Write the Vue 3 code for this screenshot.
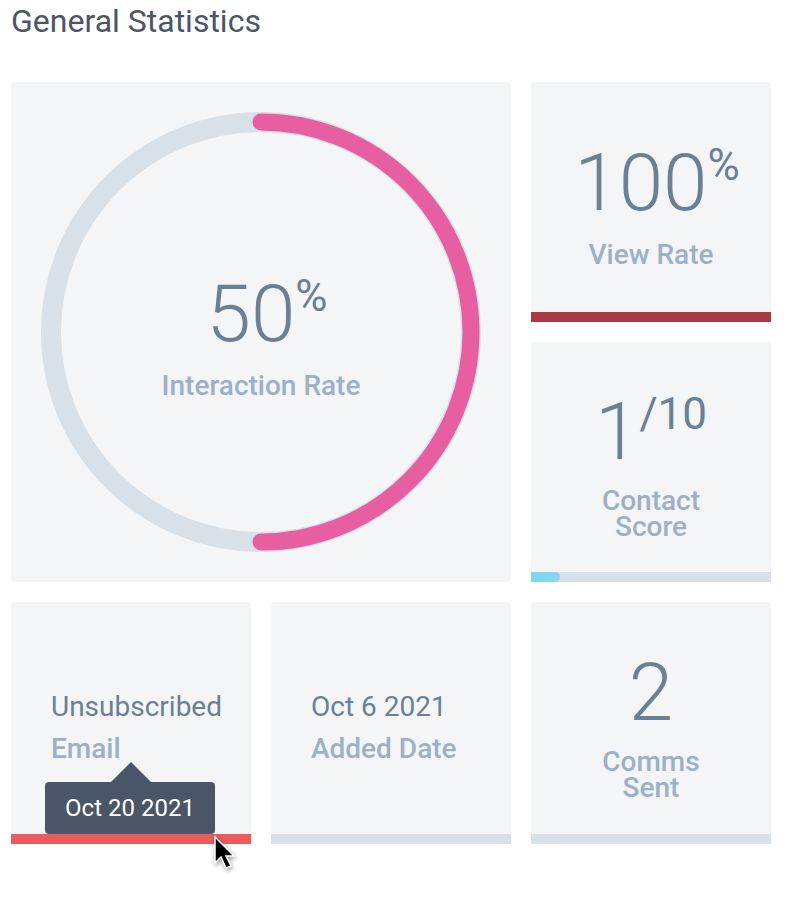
<template>
  <div class="stats">
    <h2 class="title">General Statistics</h2>

    <div class="grid">
      <div class="card gauge-card">
        <svg class="gauge" viewBox="0 0 440 440" width="440" height="440">
          <circle cx="220" cy="220" r="210" fill="none" stroke="#d8e0e8" stroke-width="20" />
          <path d="M220 10 A210 210 0 0 1 220 430" fill="none" stroke="#e85fa1" stroke-width="17" stroke-linecap="round" />
        </svg>
        <div class="gauge-text">
          <div class="value percent">50<sup class="unit">%</sup></div>
          <div class="label">Interaction Rate</div>
        </div>
      </div>

      <div class="card">
        <div class="body rate">
          <div class="value percent">100<sup class="unit">%</sup></div>
          <div class="label">View Rate</div>
        </div>
        <div class="bar bar-red"></div>
      </div>

      <div class="card">
        <div class="body">
          <div class="value">1<sup class="unit">/10</sup></div>
          <div class="label tight">Contact<br />Score</div>
        </div>
        <div class="bar"><div class="fill" :style="{ width: score * 10 + '%' }"></div></div>
      </div>

      <div class="card">
        <div class="body left">
          <div class="info">Unsubscribed</div>
          <div class="label">Email</div>
        </div>
        <div class="bar bar-coral"></div>
        <div class="tooltip">Oct 20 2021</div>
        <svg class="cursor" viewBox="0 0 24 36" width="24" height="36">
          <path d="M2 1 V27 L8 21 L13 32 L18 30 L13 20 H21 Z" fill="#000" stroke="#fff" stroke-width="1.5" />
        </svg>
      </div>

      <div class="card">
        <div class="body left">
          <div class="info">Oct 6 2021</div>
          <div class="label">Added Date</div>
        </div>
        <div class="bar"></div>
      </div>

      <div class="card">
        <div class="body">
          <div class="value">2</div>
          <div class="label tight">Comms<br />Sent</div>
        </div>
        <div class="bar"></div>
      </div>
    </div>
  </div>
</template>

<script setup>
const score = 1.2
</script>

<style>
body {
  background: #fff;
}
</style>

<style scoped>
.stats {
  width: 791px;
  height: 906px;
  padding: 0 20px 0 11px;
  box-sizing: border-box;
  font-family: Roboto, "Liberation Sans", sans-serif;
}

.title {
  margin: 0;
  height: 82px;
  font-size: 32px;
  font-weight: 400;
  line-height: 42px;
  color: #4a5568;
}

.grid {
  display: grid;
  grid-template-columns: 240px 240px 240px;
  grid-template-rows: 240px 240px 242px;
  gap: 20px;
}

.card {
  position: relative;
  display: flex;
  flex-direction: column;
  background: #f3f5f7;
  border-radius: 4px 4px 0 0;
}

.gauge-card {
  grid-column: 1 / 3;
  grid-row: 1 / 3;
  display: grid;
  place-items: center;
  border-radius: 4px;
}

.gauge,
.gauge-text {
  grid-area: 1 / 1;
}

.gauge-text {
  padding-top: 8px;
  text-align: center;
}

.body {
  flex: 1;
  display: flex;
  flex-direction: column;
  align-items: center;
  justify-content: center;
  padding-top: 13px;
  text-align: center;
}

.body.rate {
  padding-top: 17px;
}

.body.left {
  align-items: flex-start;
  padding: 20px 0 0 40px;
  text-align: left;
}

.value {
  font-size: 80px;
  font-weight: 300;
  line-height: 90px;
  color: #6b7f95;
}

.value.percent {
  padding-left: 12px;
}

.unit {
  font-size: 44px;
  font-weight: 400;
  line-height: 0;
  vertical-align: 30px;
}

.label {
  margin-top: 9px;
  font-size: 28px;
  font-weight: 500;
  line-height: 36px;
  color: #9db0c7;
}

.label.tight {
  line-height: 26px;
  margin-top: 11px;
}

.info {
  font-size: 28px;
  line-height: 42px;
  color: #6b7f95;
}

.body.left .label {
  margin-top: 0;
  line-height: 42px;
}

.bar {
  height: 10px;
  flex-shrink: 0;
  background: #d8e0e8;
}

.bar-red {
  background: #a83a48;
}

.bar-coral {
  background: #ec5a5c;
}

.fill {
  height: 100%;
  background: #80d8ee;
  border-radius: 0 5px 5px 0;
}

.tooltip {
  position: absolute;
  left: 34px;
  top: 180px;
  width: 170px;
  height: 52px;
  border-radius: 4px;
  background: #4a5568;
  color: #fff;
  font-size: 24px;
  line-height: 52px;
  text-align: center;
}

.tooltip::before {
  content: "";
  position: absolute;
  left: 66px;
  top: -20px;
  border-left: 20px solid transparent;
  border-right: 20px solid transparent;
  border-bottom: 20px solid #4a5568;
}

.cursor {
  position: absolute;
  left: 202px;
  top: 234px;
  filter: drop-shadow(1px 2px 2px rgba(0, 0, 0, 0.4));
}
</style>
